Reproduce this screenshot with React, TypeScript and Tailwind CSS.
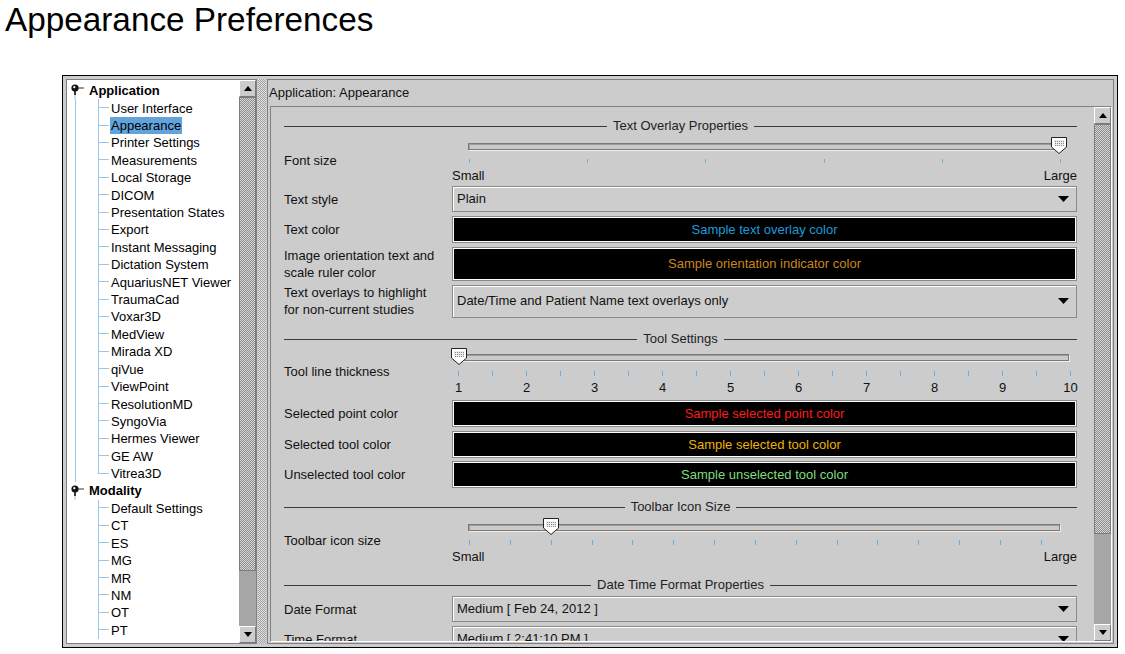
import React from "react";

const appItems = [
  "User Interface",
  "Appearance",
  "Printer Settings",
  "Measurements",
  "Local Storage",
  "DICOM",
  "Presentation States",
  "Export",
  "Instant Messaging",
  "Dictation System",
  "AquariusNET Viewer",
  "TraumaCad",
  "Voxar3D",
  "MedView",
  "Mirada XD",
  "qiVue",
  "ViewPoint",
  "ResolutionMD",
  "SyngoVia",
  "Hermes Viewer",
  "GE AW",
  "Vitrea3D",
];
const modalityItems = ["Default Settings", "CT", "ES", "MG", "MR", "NM", "OT", "PT"];

function RootRow({ label }: { label: string }) {
  return (
    <div className="flex h-[17.42px] items-center">
      <svg width="14" height="17" viewBox="0 0 14 17" className="ml-[3px] shrink-0">
        <line x1="5" y1="8" x2="5" y2="17" stroke="#99c6ec" strokeWidth="1" />
        <line x1="5" y1="8" x2="5" y2="13" stroke="#111" strokeWidth="1.6" />
        <line x1="8" y1="6" x2="14" y2="6" stroke="#333" strokeWidth="1" />
        <circle cx="5" cy="6" r="3.6" fill="#111" />
        <circle cx="4.3" cy="5.2" r="1.1" fill="#fff" />
      </svg>
      <span className="ml-[5px] font-bold leading-[16px]">{label}</span>
    </div>
  );
}

function ChildRow({
  label,
  rootLine,
  selected,
  last,
}: {
  label: string;
  rootLine: boolean;
  selected?: boolean;
  last?: boolean;
}) {
  return (
    <div className="flex h-[17.42px] items-stretch">
      <div className="w-[8px] shrink-0" />
      <div className={rootLine ? "w-[23px] shrink-0 border-l border-[#99c6ec]" : "w-[23px] shrink-0"} />
      <div className="w-[11px] shrink-0 flex flex-col">
        <div className="h-1/2 border-l border-b border-[#99c6ec]" />
        <div className={last ? "flex-1" : "flex-1 border-l border-[#99c6ec]"} />
      </div>
      <div className="flex items-center ml-[1px] whitespace-nowrap">
        <span className={selected ? "bg-[#62a3dc] px-[1px] leading-[17px]" : "px-[1px] leading-[17px]"}>{label}</span>
      </div>
    </div>
  );
}

function ArrowBtn({ up }: { up?: boolean }) {
  return (
    <div className="h-[17px] shrink-0 flex items-center justify-center bg-[#cccccc] border border-t-white border-l-white border-r-[#7a7a7a] border-b-[#7a7a7a]">
      <svg width="8" height="5" viewBox="0 0 8 5">
        {up ? <polygon points="0,5 8,5 4,0" fill="#000" /> : <polygon points="0,0 8,0 4,5" fill="#000" />}
      </svg>
    </div>
  );
}

function VScroll({ thumb }: { thumb: string }) {
  return (
    <div className="w-[17px] shrink-0 h-full flex flex-col bg-[#a6a6a6]">
      <ArrowBtn up />
      <div
        className={`${thumb} shrink-0 border border-[#7c7c7c] bg-[repeating-conic-gradient(#8c8c8c_0_25%,#d8d8d8_0_50%)] bg-[length:2px_2px]`}
      />
      <div className="flex-1" />
      <ArrowBtn />
    </div>
  );
}

function Tree() {
  return (
    <div className="w-[191px] shrink-0 h-full border border-[#808080] bg-white flex">
      <div className="flex-1 overflow-hidden pt-[2px]">
        <RootRow label="Application" />
        {appItems.map((t, i) => (
          <ChildRow key={t} label={t} rootLine selected={t === "Appearance"} last={i === appItems.length - 1} />
        ))}
        <RootRow label="Modality" />
        {modalityItems.map((t) => (
          <ChildRow key={t} label={t} rootLine={false} />
        ))}
      </div>
      <VScroll thumb="h-[474px]" />
    </div>
  );
}

function Thumb({ id }: { id: string }) {
  return (
    <svg width="16" height="17" viewBox="0 0 16 17">
      <defs>
        <pattern id={id} width="2" height="2" patternUnits="userSpaceOnUse">
          <rect width="2" height="2" fill="#ececec" />
          <rect width="1" height="1" fill="#8a8a8a" />
        </pattern>
      </defs>
      <path d="M0.5 0.5 H15.5 V10 L8 16.5 L0.5 10 Z" fill="#fff" stroke="#222" />
      <rect x="3" y="3" width="10" height="6" fill={`url(#${id})`} />
    </svg>
  );
}

function Track({ pct, id, cls }: { pct: number; id: string; cls: string }) {
  return (
    <div className={`relative h-[7px] border border-[#7a7a7a] bg-[#cacaca] shadow-[inset_1px_1px_0_#9c9c9c,1px_1px_0_#eeeeee] ${cls}`}>
      <div className="absolute top-[-7px] -translate-x-1/2" style={{ left: `${pct}%` }}>
        <Thumb id={id} />
      </div>
    </div>
  );
}

function Ticks({ n, cls }: { n: number; cls: string }) {
  return (
    <div className={`flex justify-between h-[5px] ${cls}`}>
      {Array.from({ length: n }).map((_, i) => (
        <div key={i} className="w-px h-full bg-[#62b0e6]" />
      ))}
    </div>
  );
}

function Section({ title, cls }: { title: string; cls: string }) {
  return (
    <div className={`flex items-center h-[16px] ${cls}`}>
      <div className="flex-1 h-px bg-[#3a3a3a]" />
      <span className="px-[6px] leading-[16px] text-[#222]">{title}</span>
      <div className="flex-1 h-px bg-[#3a3a3a]" />
    </div>
  );
}

function Combo({ text, cls }: { text: string; cls: string }) {
  return (
    <div
      className={`flex-1 flex items-center border border-[#8a8a8a] bg-[#cdcdcd] shadow-[inset_1px_1px_0_#fff] pl-[4px] pr-[7px] ${cls}`}
    >
      <span className="flex-1 whitespace-nowrap">{text}</span>
      <svg width="11" height="6" viewBox="0 0 11 6">
        <polygon points="0,0 11,0 5.5,6" fill="#000" />
      </svg>
    </div>
  );
}

function ColorBox({ text, color, cls }: { text: string; color: string; cls: string }) {
  return (
    <div
      className={`flex-1 flex items-center justify-center border border-[#8a8a8a] bg-black shadow-[inset_1px_1px_0_#fff,inset_-1px_-1px_0_#fff] ${cls}`}
    >
      <span className={color}>{text}</span>
    </div>
  );
}

function Row({ label, children, cls }: { label: React.ReactNode; children: React.ReactNode; cls: string }) {
  return (
    <div className={`flex items-center ${cls}`}>
      <div className="w-[168px] shrink-0 leading-[17px]">{label}</div>
      {children}
    </div>
  );
}

function Content() {
  return (
    <div className="flex-1 overflow-hidden pl-[13px] pr-[17px] pt-[11px] text-[#111]">
      <Section title="Text Overlay Properties" cls="" />
      <div className="flex h-[50px]">
        <div className="w-[168px] shrink-0 pt-[19px] leading-[16px]">Font size</div>
        <div className="flex-1 flex flex-col">
          <Track pct={100} id="t1" cls="mt-[9px] ml-[16px] mr-[17px]" />
          <Ticks n={6} cls="mt-[9px] ml-[17px] w-[592px]" />
          <div className="mt-[5px] flex justify-between leading-[16px]">
            <span>Small</span>
            <span>Large</span>
          </div>
        </div>
      </div>
      <Row label="Text style" cls="mt-[2px]">
        <Combo text="Plain" cls="h-[26px]" />
      </Row>
      <Row label="Text color" cls="mt-[4px]">
        <ColorBox text="Sample text overlay color" color="text-[#1e9bd8]" cls="h-[27px]" />
      </Row>
      <Row
        label={
          <>
            Image orientation text and
            <br />
            scale ruler color
          </>
        }
        cls="mt-[4px]"
      >
        <ColorBox text="Sample orientation indicator color" color="text-[#c8871e]" cls="h-[34px]" />
      </Row>
      <Row
        label={
          <>
            Text overlays to highlight
            <br />
            for non-current studies
          </>
        }
        cls="mt-[3px]"
      >
        <Combo text="Date/Time and Patient Name text overlays only" cls="h-[33px]" />
      </Row>

      <Section title="Tool Settings" cls="mt-[13px]" />
      <div className="flex h-[50px]">
        <div className="w-[168px] shrink-0 pt-[17px] leading-[16px]">Tool line thickness</div>
        <div className="flex-1 flex flex-col">
          <Track pct={0} id="t2" cls="mt-[7px] ml-[6px] mr-[8px]" />
          <Ticks n={19} cls="mt-[10px] ml-[6px] w-[613px]" />
          <div className="mt-[4px] ml-[6px] w-[613px] flex justify-between leading-[16px]">
            {[1, 2, 3, 4, 5, 6, 7, 8, 9, 10].map((v) => (
              <div key={v} className="w-px flex justify-center">
                <span>{v}</span>
              </div>
            ))}
          </div>
        </div>
      </div>
      <Row label="Selected point color" cls="mt-[3px]">
        <ColorBox text="Sample selected point color" color="text-[#ff1a1a]" cls="h-[27px]" />
      </Row>
      <Row label="Selected tool color" cls="mt-[4px]">
        <ColorBox text="Sample selected tool color" color="text-[#efb200]" cls="h-[27px]" />
      </Row>
      <Row label="Unselected tool color" cls="mt-[3px]">
        <ColorBox text="Sample unselected tool color" color="text-[#7fdc7f]" cls="h-[27px]" />
      </Row>

      <Section title="Toolbar Icon Size" cls="mt-[11px]" />
      <div className="flex h-[50px]">
        <div className="w-[168px] shrink-0 pt-[18px] leading-[16px]">Toolbar icon size</div>
        <div className="flex-1 flex flex-col">
          <Track pct={13.9} id="t3" cls="mt-[9px] ml-[16px] mr-[17px]" />
          <Ticks n={15} cls="mt-[9px] ml-[17px] w-[573px]" />
          <div className="mt-[4px] flex justify-between leading-[16px]">
            <span>Small</span>
            <span>Large</span>
          </div>
        </div>
      </div>

      <Section title="Date Time Format Properties" cls="mt-[12px]" />
      <Row label="Date Format" cls="mt-[3px]">
        <Combo text="Medium [ Feb 24, 2012 ]" cls="h-[26px]" />
      </Row>
      <Row label="Time Format" cls="mt-[4px]">
        <Combo text="Medium [ 2:41:10 PM ]" cls="h-[26px]" />
      </Row>
    </div>
  );
}

function RightPanel() {
  return (
    <div className="flex-1 h-full border border-[#808080] flex flex-col min-w-0">
      <div className="h-[26px] shrink-0 pl-[1px] flex items-center leading-[16px] text-[#111]">
        Application: Appearance
      </div>
      <div className="flex-1 min-h-0 ml-[2px] mr-[1px] mb-[1px] border border-t-[#808080] border-l-[#808080] border-r-white border-b-white flex">
        <Content />
        <VScroll thumb="h-[410px]" />
      </div>
    </div>
  );
}

export default function App() {
  return (
    <div className="w-[1125px] h-[654px] bg-white overflow-hidden font-['Liberation_Sans',Arial,sans-serif] text-[13px] text-black">
      <h1 className="pl-[5px] text-[33.3px] leading-[40px] font-normal text-black">Appearance Preferences</h1>
      <div className="ml-[62px] mt-[35px] w-[1056px] h-[573px] border border-black bg-[#cccccc] p-[3px] flex">
        <Tree />
        <div className="w-[10px] shrink-0 h-full px-[1px]">
          <div className="h-full bg-[repeating-conic-gradient(#9e9e9e_0_25%,#e2e2e2_0_50%)] bg-[length:2px_2px]" />
        </div>
        <RightPanel />
      </div>
    </div>
  );
}
